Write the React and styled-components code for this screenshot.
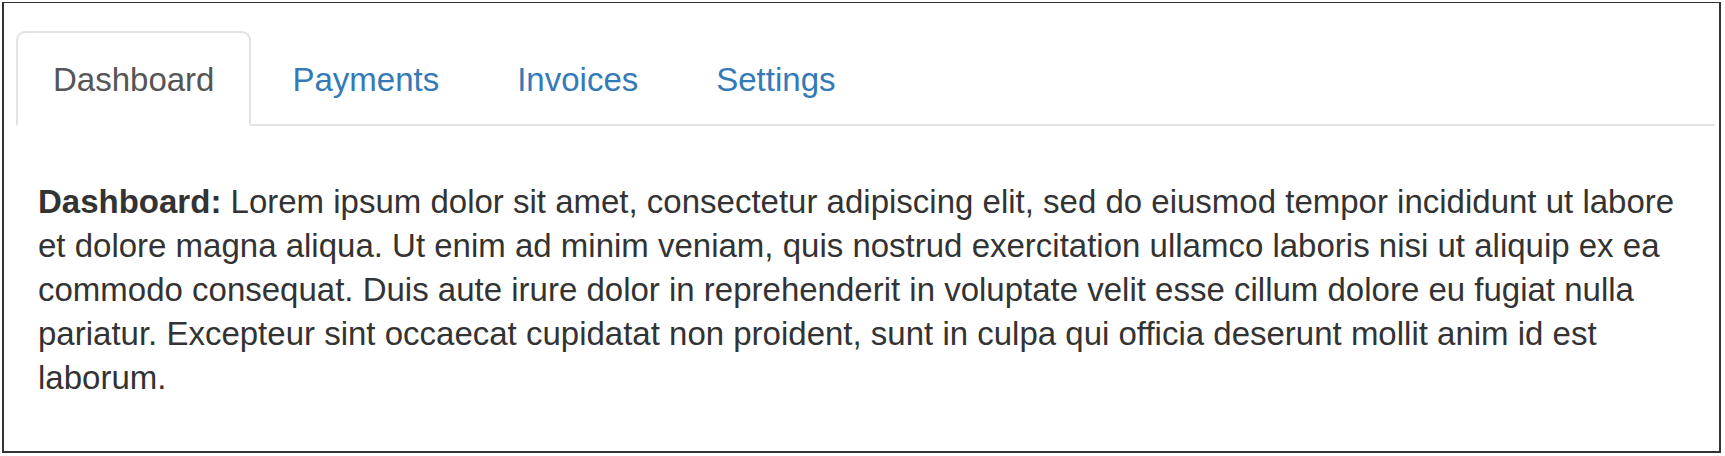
import React, { useState } from 'react';
import styled, { createGlobalStyle } from 'styled-components';

const GlobalStyle = createGlobalStyle`
  html, body {
    margin: 0;
    padding: 0;
    background: #fff;
  }
  body {
    font-family: "Liberation Sans", Arial, Helvetica, sans-serif;
    color: #333;
  }
`;

const tabs = ['Dashboard', 'Payments', 'Invoices', 'Settings'];

const App = () => {
  const [active, setActive] = useState('Dashboard');

  return (
    <Page>
      <GlobalStyle />
      <Frame>
        <TabNav>
          {tabs.map(tab => (
            <TabItem key={tab}>
              <TabLink
                href="#"
                $active={tab === active}
                onClick={e => {
                  e.preventDefault();
                  setActive(tab);
                }}
              >
                {tab}
              </TabLink>
            </TabItem>
          ))}
        </TabNav>
        <TabContent>
          <strong>{active}:</strong> Lorem ipsum dolor sit amet, consectetur
          adipiscing elit, sed do eiusmod tempor incididunt ut labore et dolore
          magna aliqua. Ut enim ad minim veniam, quis nostrud exercitation
          ullamco laboris nisi ut aliquip ex ea commodo consequat. Duis aute
          irure dolor in reprehenderit in voluptate velit esse cillum dolore eu
          fugiat nulla pariatur. Excepteur sint occaecat cupidatat non proident,
          sunt in culpa qui officia deserunt mollit anim id est laborum.
        </TabContent>
      </Frame>
    </Page>
  );
};

export default App;

const Page = styled.div`
  width: 1725px;
  height: 456px;
  padding: 2px 4px 3px 2px;
  box-sizing: border-box;
`;

const Frame = styled.div`
  height: 100%;
  box-sizing: border-box;
  border: 2px solid #333;
  border-top-width: 1px;
  padding: 28px 4px 0 12px;
`;

const TabNav = styled.ul`
  display: flex;
  list-style: none;
  margin: 0;
  padding: 0;
  border-bottom: 2px solid #e3e3e3;
`;

const TabItem = styled.li`
  margin-bottom: -2px;
  margin-right: 4px;
`;

const TabLink = styled.a`
  display: block;
  height: 95px;
  box-sizing: border-box;
  padding: 0 35px;
  line-height: 93px;
  font-size: 33px;
  text-decoration: none;
  border: 2px solid transparent;
  border-radius: 9px 9px 0 0;
  color: ${props => (props.$active ? '#555' : '#337ab7')};
  background: ${props => (props.$active ? '#fff' : 'transparent')};
  border-color: ${props =>
    props.$active ? '#e3e3e3 #e3e3e3 #fff' : 'transparent'};
`;

const TabContent = styled.div`
  width: 1660px;
  padding: 54px 0 0 22px;
  font-size: 33px;
  line-height: 44px;
`;
